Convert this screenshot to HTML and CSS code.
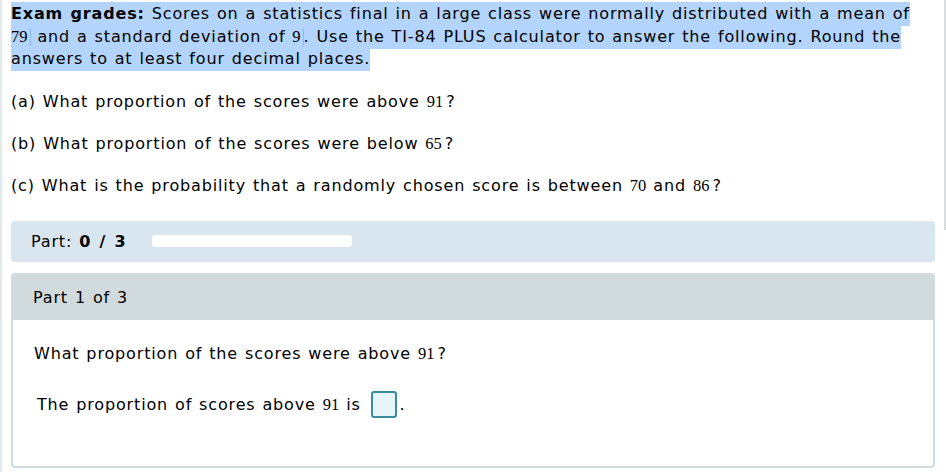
FILE: index.html
```html
<!DOCTYPE html>
<html>
<head>
<meta charset="utf-8">
<link rel="stylesheet" href="styles.css">
</head>
<body>
<div class="page">
  <div class="scroll"></div>
  <p class="intro"><span class="sel"><b>Exam grades:</b> Scores on a statistics final in a large class were normally distributed with a mean of <span class="m">79</span><span class="caret"></span> and a standard deviation of <span class="m">9</span><span class="caret"></span>. Use the TI-84 PLUS calculator to answer the following. Round the answers to at least four decimal places.</span></p>
  <p class="q">(a) What proportion of the scores were above <span class="m mq">91</span>?</p>
  <p class="q">(b) What proportion of the scores were below <span class="m mq">65</span>?</p>
  <p class="q">(c) What is the probability that a randomly chosen score is between <span class="m">70</span> and <span class="m mq">86</span>?</p>

  <div class="progress">
    <span class="plabel">Part: <b>0 / 3</b></span>
    <span class="track"></span>
  </div>

  <div class="part">
    <div class="part-head">Part 1 of 3</div>
    <div class="part-body">
      <p class="pq">What proportion of the scores were above <span class="m mq">91</span>?</p>
      <p class="pa">The proportion of scores above <span class="m">91</span> is <span class="input"></span>.</p>
    </div>
  </div>
</div>
</body>
</html>
```
FILE: styles.css
```css
html, body {
  margin: 0;
  padding: 0;
  background: #fff;
}
body {
  font-family: "DejaVu Sans", Verdana, sans-serif;
  font-size: 16px;
  letter-spacing: 0.85px;
  word-spacing: 1px;
  color: #000;
}
.page {
  position: relative;
  height: 472px;
  border-left: 2px solid #e3e8eb;
  padding: 3px 11px 0 9px;
  box-sizing: border-box;
  overflow: hidden;
}
.scroll {
  position: absolute;
  right: 0;
  top: 0;
  width: 2px;
  height: 230px;
  background: #d8dcdf;
}
p {
  margin: 0;
}
.intro {
  line-height: 22.5px;
  width: 910px;
}
.sel {
  background: #b3d4fc;
  padding: 2px 0 3px;
}
.m {
  font-family: "Liberation Serif", "Times New Roman", serif;
  font-size: 16.5px;
  letter-spacing: 0;
}
.mq {
  margin-right: 3px;
}
.caret {
  display: inline-block;
  width: 1px;
  height: 18px;
  margin-left: 2px;
  vertical-align: -4px;
  background: #8fb8e8;
}
.q {
  line-height: 22px;
  margin-top: 20px;
}
.progress {
  margin-top: 24px;
  height: 41px;
  background: #dae6ef;
  border-radius: 4px;
  display: flex;
  align-items: center;
  padding-left: 20px;
}
.plabel {
  width: 121px;
}
.plabel b {
  letter-spacing: 1.3px;
}
.track {
  width: 200px;
  height: 12px;
  background: #fff;
  border-radius: 3px;
}
.part {
  margin-top: 11px;
  border-radius: 4px;
  overflow: hidden;
  border: 2px solid #d1dadd;
  height: 195px;
  box-sizing: border-box;
}
.part-head {
  background: #d1dadd;
  height: 45px;
  display: flex;
  align-items: center;
  padding-left: 20px;
}
.part-body {
  padding: 23px 0 0 21px;
}
.pq {
  line-height: 22px;
}
.pa {
  margin-top: 26px;
  line-height: 28px;
  padding-left: 3px;
  display: flex;
  align-items: center;
  white-space: pre;
}
.input {
  display: inline-block;
  width: 22px;
  height: 23px;
  border: 2px solid #3a8c9c;
  border-radius: 3px;
  background: #e6f3f8;
  margin-left: 3px;
  margin-right: 3px;
}
```
